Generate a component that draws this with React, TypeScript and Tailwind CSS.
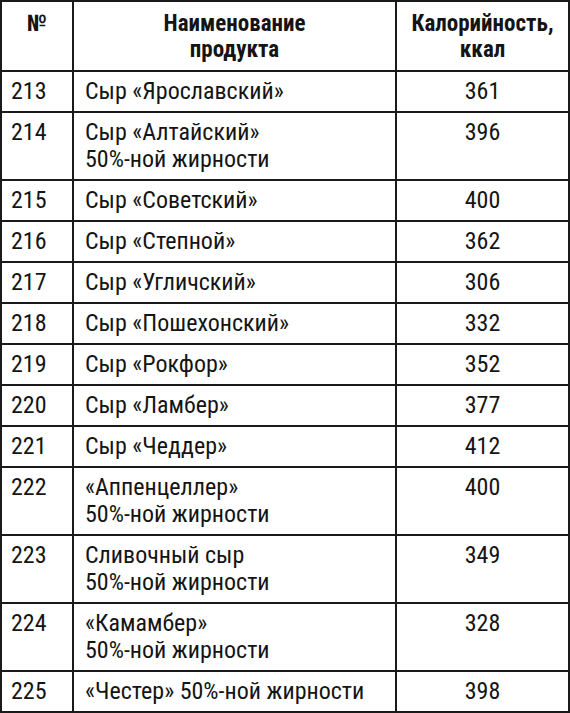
import React from "react";

interface Row {
  id: number;
  name: string[];
  kcal: number;
}

const ROWS: Row[] = [
  { id: 213, name: ["Сыр «Ярославский»"], kcal: 361 },
  { id: 214, name: ["Сыр «Алтайский»", "50%-ной жирности"], kcal: 396 },
  { id: 215, name: ["Сыр «Советский»"], kcal: 400 },
  { id: 216, name: ["Сыр «Степной»"], kcal: 362 },
  { id: 217, name: ["Сыр «Угличский»"], kcal: 306 },
  { id: 218, name: ["Сыр «Пошехонский»"], kcal: 332 },
  { id: 219, name: ["Сыр «Рокфор»"], kcal: 352 },
  { id: 220, name: ["Сыр «Ламбер»"], kcal: 377 },
  { id: 221, name: ["Сыр «Чеддер»"], kcal: 412 },
  { id: 222, name: ["«Аппенцеллер»", "50%-ной жирности"], kcal: 400 },
  { id: 223, name: ["Сливочный сыр", "50%-ной жирности"], kcal: 349 },
  { id: 224, name: ["«Камамбер»", "50%-ной жирности"], kcal: 328 },
  { id: 225, name: ["«Честер» 50%-ной жирности"], kcal: 398 },
];

const App = () => {
  return (
    <div
      className="w-[570px] h-[713px] bg-white text-[#141414] border-2 border-[#1a1a1a] flex flex-col"
      style={{ fontFamily: '"Liberation Sans Narrow", "Roboto Condensed", "Liberation Sans", sans-serif' }}
    >
      {/* header */}
      <div className="flex h-[68px] text-[23px] leading-[26px] font-bold text-center">
        <div className="w-[70px] pt-[9px]">№</div>
        <div className="w-[323px] border-l-2 border-[#1a1a1a] pt-[9px]">
          Наименование
          <br />
          продукта
        </div>
        <div className="flex-1 border-l-2 border-[#1a1a1a] pt-[9px]">
          Калорийность,
          <br />
          ккал
        </div>
      </div>

      {ROWS.map((row) => (
        <div
          key={row.id}
          className={`flex border-t-2 border-[#1a1a1a] text-[24px] leading-[27px] ${
            row.name.length > 1 ? "h-[68px]" : "h-[41px]"
          }`}
        >
          <div className="w-[70px] pl-[9px] pt-[6px]">{row.id}</div>
          <div className="w-[323px] border-l-2 border-[#1a1a1a] pl-[11px] pt-[6px] whitespace-nowrap">
            {row.name.map((line, i) => (
              <div key={i}>{line}</div>
            ))}
          </div>
          <div className="flex-1 border-l-2 border-[#1a1a1a] pt-[6px] text-center">{row.kcal}</div>
        </div>
      ))}
    </div>
  );
};

export default App;
